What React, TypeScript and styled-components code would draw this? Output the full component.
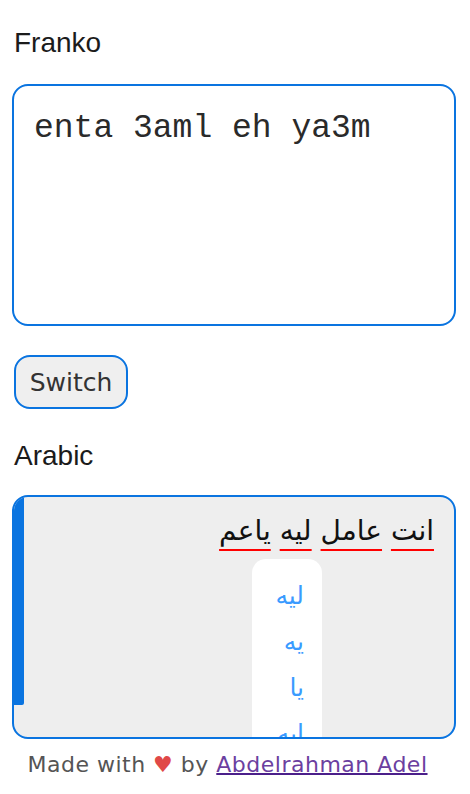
import React from "react";
import styled, { createGlobalStyle } from "styled-components";

const GlobalStyle = createGlobalStyle`
  body {
    margin: 0;
    background: #ffffff;
    font-family: "Liberation Sans", Arial, sans-serif;
  }
`;

const BLUE = "#0a74e0";

const App: React.FC = () => {
  const suggestions = ["ليه", "يه", "يا", "ايه"];

  return (
    <Page>
      <GlobalStyle />
      <Label>Franko</Label>
      <Input defaultValue="enta 3aml eh ya3m" spellCheck={false} />
      <SwitchButton>Switch</SwitchButton>
      <Label>Arabic</Label>
      <Output>
        <ScrollThumb />
        <Line dir="rtl">
          <Word>انت</Word> <Word>عامل</Word> <Word>ليه</Word> <Word>ياعم</Word>
        </Line>
        <Menu>
          {suggestions.map((s) => (
            <MenuItem key={s}>{s}</MenuItem>
          ))}
        </Menu>
      </Output>
      <Footer>
        Made with <Heart>♥</Heart> by <a href="#">Abdelrahman Adel</a>
      </Footer>
    </Page>
  );
};

export default App;

const Page = styled.div`
  display: flex;
  flex-direction: column;
  align-items: flex-start;
  padding: 27px 14px 0 12px;
`;

const Label = styled.div`
  margin-left: 2px;
  font-size: 28px;
  line-height: 32px;
  color: #1b1b1b;
`;

const Input = styled.textarea`
  box-sizing: border-box;
  margin-top: 25px;
  width: 100%;
  height: 242px;
  padding: 23px 20px;
  border: 2px solid ${BLUE};
  border-radius: 16px;
  outline: none;
  resize: none;
  font-family: "Liberation Mono", "DejaVu Sans Mono", monospace;
  font-size: 33px;
  line-height: 40px;
  color: #2a2a2a;
  background: #ffffff;
`;

const SwitchButton = styled.button`
  box-sizing: border-box;
  margin: 29px 0 31px 2px;
  width: 114px;
  height: 54px;
  padding: 0;
  border: 2px solid ${BLUE};
  border-radius: 16px;
  background: #efefef;
  font-family: "DejaVu Sans", sans-serif;
  font-size: 25px;
  color: #333333;
`;

const Output = styled.div`
  position: relative;
  box-sizing: border-box;
  margin-top: 23px;
  width: 100%;
  height: 244px;
  padding: 14px 20px;
  border: 2px solid ${BLUE};
  border-radius: 16px;
  background: #eeeeee;
  overflow: hidden;
`;

const ScrollThumb = styled.div`
  position: absolute;
  left: -2px;
  top: -2px;
  width: 12px;
  height: 210px;
  background: ${BLUE};
  border-radius: 0 0 2px 2px;
`;

const Line = styled.div`
  text-align: right;
  font-family: "DejaVu Sans", sans-serif;
  font-size: 28px;
  line-height: 40px;
  color: #111111;
`;

const Word = styled.span`
  text-decoration: underline;
  text-decoration-color: #ff0000;
  text-decoration-thickness: 2px;
  text-underline-offset: 9px;
`;

const Menu = styled.div`
  position: absolute;
  left: 238px;
  top: 62px;
  width: 70px;
  height: 200px;
  padding-top: 14px;
  box-sizing: border-box;
  background: #ffffff;
  border-radius: 14px 14px 0 0;
  display: flex;
  flex-direction: column;
  align-items: flex-end;
  padding-right: 18px;
`;

const MenuItem = styled.div`
  font-family: "DejaVu Sans", sans-serif;
  font-size: 25px;
  line-height: 46px;
  color: #3a9bff;
`;

const Footer = styled.div`
  align-self: center;
  margin: 13px 13px 0 0;
  font-family: "DejaVu Sans", sans-serif;
  font-size: 22px;
  letter-spacing: 0.5px;
  line-height: 26px;
  color: #555555;

  a {
    color: #6b3fa0;
    text-decoration-color: #4b1f8a;
    text-decoration-thickness: 2px;
  }
`;

const Heart = styled.span`
  color: #e04848;
`;
